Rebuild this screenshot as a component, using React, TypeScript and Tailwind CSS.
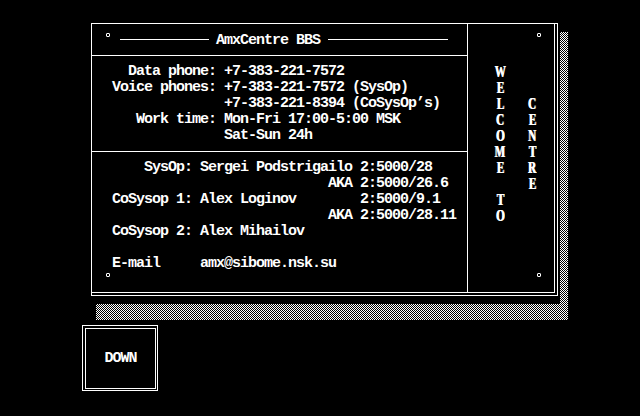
import React from 'react';

const mono = "font-['Liberation_Mono',monospace] font-bold text-[15px] leading-[16px] tracking-[-1px] whitespace-pre text-white";
const checker =
  'bg-[repeating-conic-gradient(#fff_0%_25%,#000_0%_50%)] bg-[length:2px_2px]';

const infoLines = [
  '  Data phone: +7-383-221-7572',
  'Voice phones: +7-383-221-7572 (SysOp)',
  '              +7-383-221-8394 (CoSysOp’s)',
  '   Work time: Mon-Fri 17:00-5:00 MSK',
  '              Sat-Sun 24h',
];

const staffLines = [
  '    SysOp: Sergei Podstrigailo 2:5000/28',
  '                           AKA 2:5000/26.6',
  'CoSysop 1: Alex Loginov        2:5000/9.1',
  '                           AKA 2:5000/28.11',
  'CoSysop 2: Alex Mihailov',
  ' ',
  'E-mail     amx@sibome.nsk.su',
];

function Dot({ className = '' }: { className?: string }) {
  return <div className={`w-[4px] h-[4px] rounded-[1px] border border-white ${className}`} />;
}

// vertical banner letters, one per 16px text row
function Letters({ text, className = '' }: { text: string; className?: string }) {
  return (
    <div className={`w-[8px] flex flex-col ${className}`}>
      {text.split('').map((ch, i) => (
        <div key={i} className="h-[16px] flex justify-center text-white">
          <span className="inline-block h-[16px] scale-x-[0.7] font-['Liberation_Serif',serif] font-bold text-[16px] leading-[16px] [text-shadow:1px_0_0_#fff]">
            {ch === ' ' ? '\u00a0' : ch}
          </span>
        </div>
      ))}
    </div>
  );
}

export default function App() {
  return (
    <div className="w-[640px] h-[416px] bg-black overflow-hidden pt-[23px]">
      <div className="ml-[91px] grid grid-cols-[5px_462px_2px_8px] grid-rows-[9px_264px_8px_16px]">
        {/* main panel */}
        <div className="col-start-1 col-span-2 row-start-1 row-span-2 border border-white pr-[2px] pb-[2px]">
          <div className="h-full flex border-r border-b border-white">
            {/* left side */}
            <div className="w-[376px] flex flex-col border-r border-white">
              <div className="h-[32px] flex items-center border-b border-white">
                <Dot className="self-start mt-[9px] ml-[14px]" />
                <div className="ml-[10px] w-[89px] h-px bg-white" />
                <span className={`${mono} ml-[7px] pt-[2px]`}>AmxCentre BBS</span>
                <div className="ml-[8px] w-[120px] h-px bg-white" />
              </div>
              <div className="h-[96px] pt-[8px] pl-[20px] border-b border-white">
                {infoLines.map((l, i) => (
                  <div key={i} className={mono}>{l}</div>
                ))}
              </div>
              <div className="flex-1 flex flex-col pt-[8px]">
                <div className="pl-[20px]">
                  {staffLines.map((l, i) => (
                    <div key={i} className={mono}>{l}</div>
                  ))}
                </div>
                <Dot className="mt-auto mb-[15px] ml-[14px]" />
              </div>
            </div>
            {/* right side */}
            <div className="flex-1 flex flex-col pt-[9px]">
              <Dot className="ml-[69px]" />
              <div className="mt-[27px] flex items-start">
                <Letters text="WELCOME TO" className="ml-[28px]" />
                <Letters text="CENTRE" className="ml-[24px] mt-[32px]" />
              </div>
              <Dot className="mt-auto mb-[15px] ml-[69px]" />
            </div>
          </div>
        </div>
        {/* shadow */}
        <div className={`col-start-4 row-start-2 row-span-3 ${checker}`} />
        <div className={`col-start-2 col-span-3 row-start-4 ${checker}`} />
      </div>

      <div className="ml-[82px] mt-[5px] w-[76px] h-[66px] border border-white pl-[2px] pt-[2px] pr-[1px] pb-[1px]">
        <div className="h-full border border-white flex items-center justify-center">
          <span className={mono}>DOWN</span>
        </div>
      </div>
    </div>
  );
}
